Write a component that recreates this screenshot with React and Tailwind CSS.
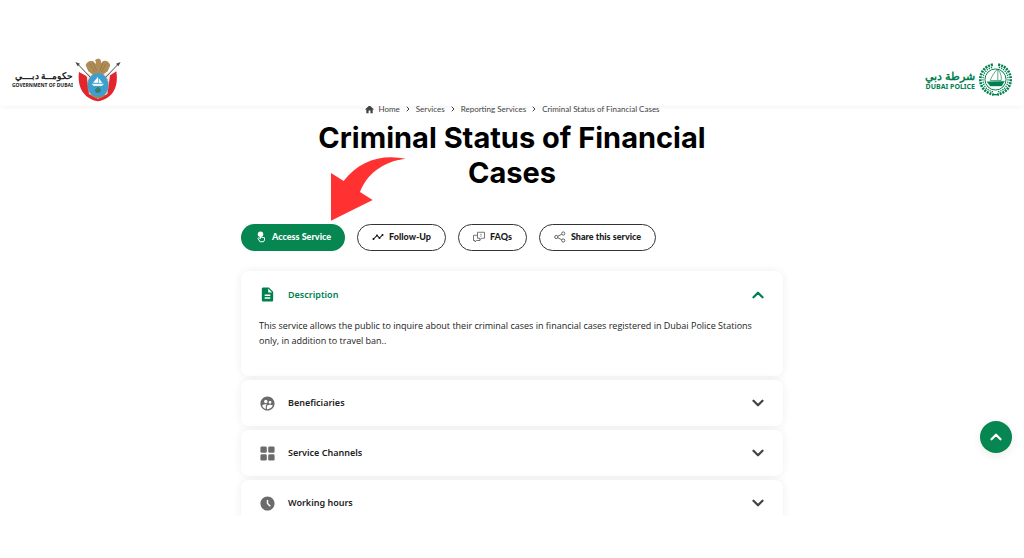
import { useState } from 'react'
import {
  MdAccessTimeFilled,
  MdDescription,
  MdHome,
  MdSupervisedUserCircle,
  MdTimeline
} from 'react-icons/md'
import { ChevronDown, ChevronRight, ChevronUp } from 'lucide-react'

const DubaiEmblem = () => (
  <svg viewBox="230 38 138 132" className="h-[44px] w-[46px]" aria-hidden="true">
    <path d="M242 80 C236 122 254 160 299 168 C346 160 361 122 354 78 L332 92 L299 150 L264 92 Z" fill="#e3262e" />
    <path d="M264 84 L272 146 L299 160 L327 146 L336 84 Z" fill="#f3ece6" />
    <path d="M236 54 L284 104 M362 54 L314 104" stroke="#4b4a48" strokeWidth="3" />
    <path d="M231 50 L245 55 L238 63 Z M367 50 L353 55 L360 63 Z" fill="#4b4a48" />
    <path d="M298 40 C308 39 310 48 307 54 L315 47 C326 44 332 50 336 60 L328 78 L311 90 H286 L270 78 L262 60 C265 49 274 44 285 48 L292 56 C292 51 296 49 290 48 C290 43 294 40 298 40 Z" fill="#b08d57" />
    <path d="M274 54 L290 80 M283 52 L295 76 M324 54 L309 80 M315 52 L304 76" stroke="#8f7040" strokeWidth="2" />
    <ellipse cx="299" cy="120" rx="31" ry="37" fill="#3d9fd0" stroke="#8a8f86" strokeWidth="3" strokeDasharray="5 3" />
    <path d="M284 112 L299 94 V112 Z M301 98 L312 113 H301 Z" fill="#fff" />
    <path d="M280 115 H317 L311 122 H286 Z" fill="#e8f3f8" />
    <path d="M289 134 L299 124 L309 134 L304 142 H293 Z" fill="#3c7a6c" />
    <path d="M279 149 Q299 165 320 149" stroke="#a9834c" strokeWidth="4" fill="none" />
  </svg>
)

const PoliceEmblem = () => (
  <svg viewBox="0 0 100 100" className="size-[33px]" fill="none" stroke="#00804f" aria-hidden="true">
    <path d="M42 5 C16 10 4 30 4 50 C4 74 20 91 44 95" strokeWidth="8" strokeDasharray="6 3" />
    <path d="M58 5 C84 10 96 30 96 50 C96 74 80 91 56 95" strokeWidth="8" strokeDasharray="6 3" />
    <path d="M40 13 C22 18 12 32 12 50 C12 70 24 83 43 87" strokeWidth="4" strokeDasharray="4 3" />
    <path d="M60 13 C78 18 88 32 88 50 C88 70 76 83 57 87" strokeWidth="4" strokeDasharray="4 3" />
    <circle cx="50" cy="50" r="32" strokeWidth="3" />
    <path d="M57 18 V54 M56 18 C45 30 38 42 34 53 H56" strokeWidth="2" />
    <path d="M58 20 C67 32 69 44 67 53 H58" strokeWidth="2" />
    <path d="M24 57 L77 55 L69 70 H34 Z" fill="#00804f" />
    <path d="M40 96 H60" strokeWidth="4" />
  </svg>
)

const TouchIcon = () => (
  <svg viewBox="0 0 24 24" className="size-3" fill="none" stroke="currentColor" strokeWidth="2" aria-hidden="true">
    <circle cx="11" cy="6.5" r="5.5" fill="currentColor" stroke="none" />
    <path d="M11 7 V15 L7 13.5 L6 15 L10 21.5 H17 L19 18 V13.5 L12 12" strokeLinejoin="round" />
  </svg>
)

const FaqIcon = () => (
  <svg viewBox="0 0 24 24" className="size-3" fill="none" stroke="#555" strokeWidth="1.6" aria-hidden="true">
    <path d="M9 2.5 H23 V14.5 H17 L14 17.5 V14.5 H9 Z" />
    <path d="M9 8.5 H1 V19 H4 V22 L7 19 H14 V17" />
    <path d="M16 5.5 V9 M16 10.5 V12" />
  </svg>
)

const ShareIcon = () => (
  <svg viewBox="0 0 24 24" className="size-3" fill="none" stroke="#444" strokeWidth="1.6" aria-hidden="true">
    <circle cx="4.5" cy="12" r="3.2" />
    <circle cx="18.5" cy="5" r="3.2" />
    <circle cx="18.5" cy="19" r="3.2" />
    <path d="M7.5 10.5 L15.5 6.5 M7.5 13.5 L15.5 17.5" />
  </svg>
)

const ChannelsIcon = ({ className }) => (
  <svg viewBox="0 0 24 24" className={className} fill="currentColor" aria-hidden="true">
    <rect x="2" y="2" width="9" height="9" rx="2" />
    <rect x="13" y="2" width="9" height="9" rx="2" />
    <rect x="2" y="13" width="9" height="9" rx="2" />
    <rect x="13" y="13" width="9" height="9" rx="2" />
  </svg>
)

const PointerArrow = () => (
  <svg
    viewBox="303 20 225 192"
    className="pointer-events-none absolute bottom-full left-[90px] mb-[3px] h-[64px] w-[75px]"
    aria-hidden="true"
  >
    <path d="M527 25 C455 10 385 32 341 92 L303 68 V211 L428 149 L390 125 C409 74 457 33 527 25 Z" fill="#ff3131" />
  </svg>
)

const crumbs = ['Home', 'Services', 'Reporting Services', 'Criminal Status of Financial Cases']

const sections = [
  {
    id: 'description',
    title: 'Description',
    icon: MdDescription,
    body: 'This service allows the public to inquire about their criminal cases in financial cases registered in Dubai Police Stations only, in addition to travel ban..'
  },
  { id: 'beneficiaries', title: 'Beneficiaries', icon: MdSupervisedUserCircle },
  { id: 'channels', title: 'Service Channels', icon: ChannelsIcon },
  { id: 'hours', title: 'Working hours', icon: MdAccessTimeFilled }
]

const actionClass =
  "flex h-[27px] items-center gap-[5px] rounded-full border border-[#333] bg-white px-[14px] pb-px font-['Lato',sans-serif] text-[9px] font-black text-[#1a1a1a]"

const Section = ({ section, open, onToggle }) => {
  const Icon = section.icon
  const Chevron = open ? ChevronUp : ChevronDown

  return (
    <section className="rounded-lg bg-white shadow-[0_0_10px_rgba(0,0,0,0.07)]">
      <h2>
        <button
          type="button"
          onClick={onToggle}
          aria-expanded={open}
          className={`flex w-full items-center pl-[18px] pr-4 text-left text-[9px] font-semibold ${open ? 'h-[47px] text-[#00804f]' : 'h-[46px] text-[#222]'}`}
        >
          <Icon className={`size-[17px] ${open ? 'text-[#00804f]' : 'text-[#6b6b6b]'}`} />
          <span className="ml-3 flex-1">{section.title}</span>
          <Chevron className={`size-[18px] ${open ? 'text-[#00804f]' : 'text-[#444]'}`} strokeWidth={3} />
        </button>
      </h2>
      {open && section.body && (
        <p className="pb-7 pl-[18px] pr-4 font-['Open_Sans',sans-serif] text-[9px] leading-[15px] text-[#222]">
          {section.body}
        </p>
      )}
    </section>
  )
}

const App = () => {
  const [openId, setOpenId] = useState('description')

  return (
    <div className="flex h-screen flex-col bg-white pb-[42px] pt-[53px] font-['Noto_Sans',sans-serif] text-black">
      <header className="relative z-10 flex h-[53px] shrink-0 items-center justify-between bg-white px-3 shadow-[0_4px_4px_-2px_rgba(0,0,0,0.04)]">
        <a href="#government" className="flex items-center gap-[2px]">
          <span className="flex flex-col items-end">
            <span lang="ar" dir="rtl" className="text-[9px] font-bold leading-[10px] text-[#222]">حكومــة دبـــي</span>
            <span className="text-[5px] font-bold leading-[8px] text-[#222]">GOVERNMENT OF DUBAI</span>
          </span>
          <DubaiEmblem />
        </a>
        <a href="#police" className="flex items-center gap-1 text-[#00804f]">
          <span className="flex flex-col items-end">
            <span lang="ar" dir="rtl" className="text-[11px] font-bold leading-[13px]">شرطة دبي</span>
            <span className="text-[7px] font-bold leading-[9px]">DUBAI POLICE</span>
          </span>
          <PoliceEmblem />
        </a>
      </header>

      <main className="min-h-0 flex-1 overflow-hidden">
        <nav aria-label="Breadcrumb" className="-mt-1 flex justify-center">
          <ol className="flex items-center font-['Lato',sans-serif] text-[8px] leading-[14px] text-[#444]">
            {crumbs.map((crumb, index) => (
              <li key={crumb} className="flex items-center">
                {index > 0 && <ChevronRight className="mx-1 size-2" strokeWidth={3} />}
                <a href="#crumb" className="flex items-center gap-[3px]">
                  {index === 0 && <MdHome className="size-[11px]" />}
                  {crumb}
                </a>
              </li>
            ))}
          </ol>
        </nav>

        <div className="mx-auto max-w-[542px]">
          <h1 className="mx-auto max-w-[420px] pt-1 text-center font-['Inter',sans-serif] text-[29px] font-bold leading-[35px]">
            Criminal Status of Financial Cases
          </h1>

          <div className="mt-[34px] flex gap-3">
            <div className="relative">
              <button
                type="button"
                className="flex h-[27px] items-center gap-[5px] rounded-full bg-[#068650] px-[14px] pb-px font-['Lato',sans-serif] text-[9px] font-black text-white"
              >
                <TouchIcon />
                Access Service
              </button>
              <PointerArrow />
            </div>
            <button type="button" className={actionClass}>
              <MdTimeline className="size-3" />
              Follow-Up
            </button>
            <button type="button" className={actionClass}>
              <FaqIcon />
              FAQs
            </button>
            <button type="button" className={actionClass}>
              <ShareIcon />
              Share this service
            </button>
          </div>

          <div className="mt-5 flex flex-col gap-1">
            {sections.map((section) => (
              <Section
                key={section.id}
                section={section}
                open={openId === section.id}
                onToggle={() => setOpenId(openId === section.id ? '' : section.id)}
              />
            ))}
          </div>
        </div>
      </main>

      <button
        type="button"
        aria-label="Back to top"
        className="fixed bottom-[105px] right-3 flex size-8 items-center justify-center rounded-full bg-[#068650] text-white shadow-[0_3px_10px_rgba(0,0,0,0.08)]"
      >
        <ChevronUp className="size-[18px]" strokeWidth={3} />
      </button>
    </div>
  )
}

export default App
